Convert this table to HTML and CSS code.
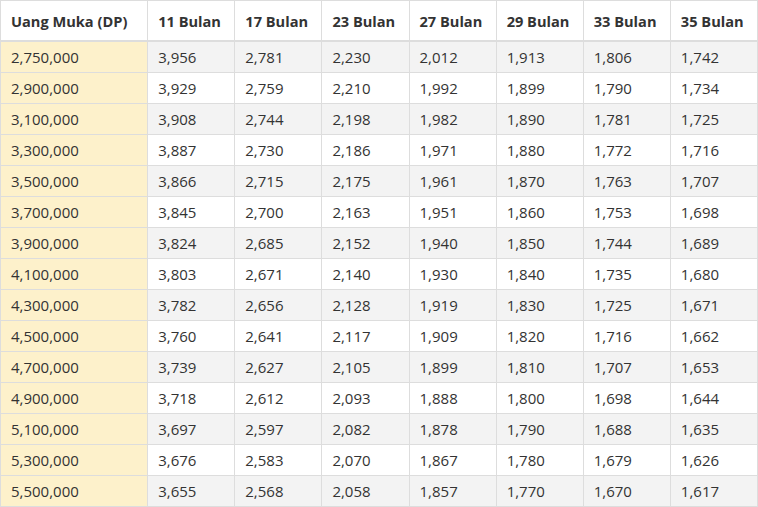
FILE: index.html
```html
<!DOCTYPE html>
<html>
<head>
<meta charset="utf-8">
<link rel="stylesheet" href="styles.css">
</head>
<body>
<table class="tbl">
<colgroup>
<col class="c-dp"><col class="c-m"><col class="c-m"><col class="c-m"><col class="c-m"><col class="c-m"><col class="c-m"><col class="c-m">
</colgroup>
<thead>
<tr><th>Uang Muka (DP)</th><th>11 Bulan</th><th>17 Bulan</th><th>23 Bulan</th><th>27 Bulan</th><th>29 Bulan</th><th>33 Bulan</th><th>35 Bulan</th></tr>
</thead>
<tbody>
<tr><td>2,750,000</td><td>3,956</td><td>2,781</td><td>2,230</td><td>2,012</td><td>1,913</td><td>1,806</td><td>1,742</td></tr>
<tr><td>2,900,000</td><td>3,929</td><td>2,759</td><td>2,210</td><td>1,992</td><td>1,899</td><td>1,790</td><td>1,734</td></tr>
<tr><td>3,100,000</td><td>3,908</td><td>2,744</td><td>2,198</td><td>1,982</td><td>1,890</td><td>1,781</td><td>1,725</td></tr>
<tr><td>3,300,000</td><td>3,887</td><td>2,730</td><td>2,186</td><td>1,971</td><td>1,880</td><td>1,772</td><td>1,716</td></tr>
<tr><td>3,500,000</td><td>3,866</td><td>2,715</td><td>2,175</td><td>1,961</td><td>1,870</td><td>1,763</td><td>1,707</td></tr>
<tr><td>3,700,000</td><td>3,845</td><td>2,700</td><td>2,163</td><td>1,951</td><td>1,860</td><td>1,753</td><td>1,698</td></tr>
<tr><td>3,900,000</td><td>3,824</td><td>2,685</td><td>2,152</td><td>1,940</td><td>1,850</td><td>1,744</td><td>1,689</td></tr>
<tr><td>4,100,000</td><td>3,803</td><td>2,671</td><td>2,140</td><td>1,930</td><td>1,840</td><td>1,735</td><td>1,680</td></tr>
<tr><td>4,300,000</td><td>3,782</td><td>2,656</td><td>2,128</td><td>1,919</td><td>1,830</td><td>1,725</td><td>1,671</td></tr>
<tr><td>4,500,000</td><td>3,760</td><td>2,641</td><td>2,117</td><td>1,909</td><td>1,820</td><td>1,716</td><td>1,662</td></tr>
<tr><td>4,700,000</td><td>3,739</td><td>2,627</td><td>2,105</td><td>1,899</td><td>1,810</td><td>1,707</td><td>1,653</td></tr>
<tr><td>4,900,000</td><td>3,718</td><td>2,612</td><td>2,093</td><td>1,888</td><td>1,800</td><td>1,698</td><td>1,644</td></tr>
<tr><td>5,100,000</td><td>3,697</td><td>2,597</td><td>2,082</td><td>1,878</td><td>1,790</td><td>1,688</td><td>1,635</td></tr>
<tr><td>5,300,000</td><td>3,676</td><td>2,583</td><td>2,070</td><td>1,867</td><td>1,780</td><td>1,679</td><td>1,626</td></tr>
<tr><td>5,500,000</td><td>3,655</td><td>2,568</td><td>2,058</td><td>1,857</td><td>1,770</td><td>1,670</td><td>1,617</td></tr>
</tbody>
</table>
</body>
</html>
```

FILE: styles.css
```css
html, body {
  margin: 0;
  padding: 0;
  background: #fff;
}
body {
  font-family: "Open Sans", "Noto Sans", sans-serif;
  font-size: 15px;
  color: #333;
}
.tbl {
  border-collapse: collapse;
  table-layout: fixed;
  width: 758px;
}
.c-dp { width: 147px; }
.c-m { width: 87px; }
.tbl th,
.tbl td {
  border: 1px solid #ddd;
  text-align: left;
  line-height: 20px;
  white-space: nowrap;
}
.tbl th {
  font-weight: 700;
  font-size: 14.6px;
  padding: 10px 10px 9px;
  border-bottom: 2px solid #ddd;
  color: #333;
}
.tbl td {
  padding: 5px 10px;
}
.tbl tbody tr:nth-child(odd) td {
  background: #f3f3f3;
}
.tbl tbody tr td:first-child {
  background: #fdf1cb;
}
```
